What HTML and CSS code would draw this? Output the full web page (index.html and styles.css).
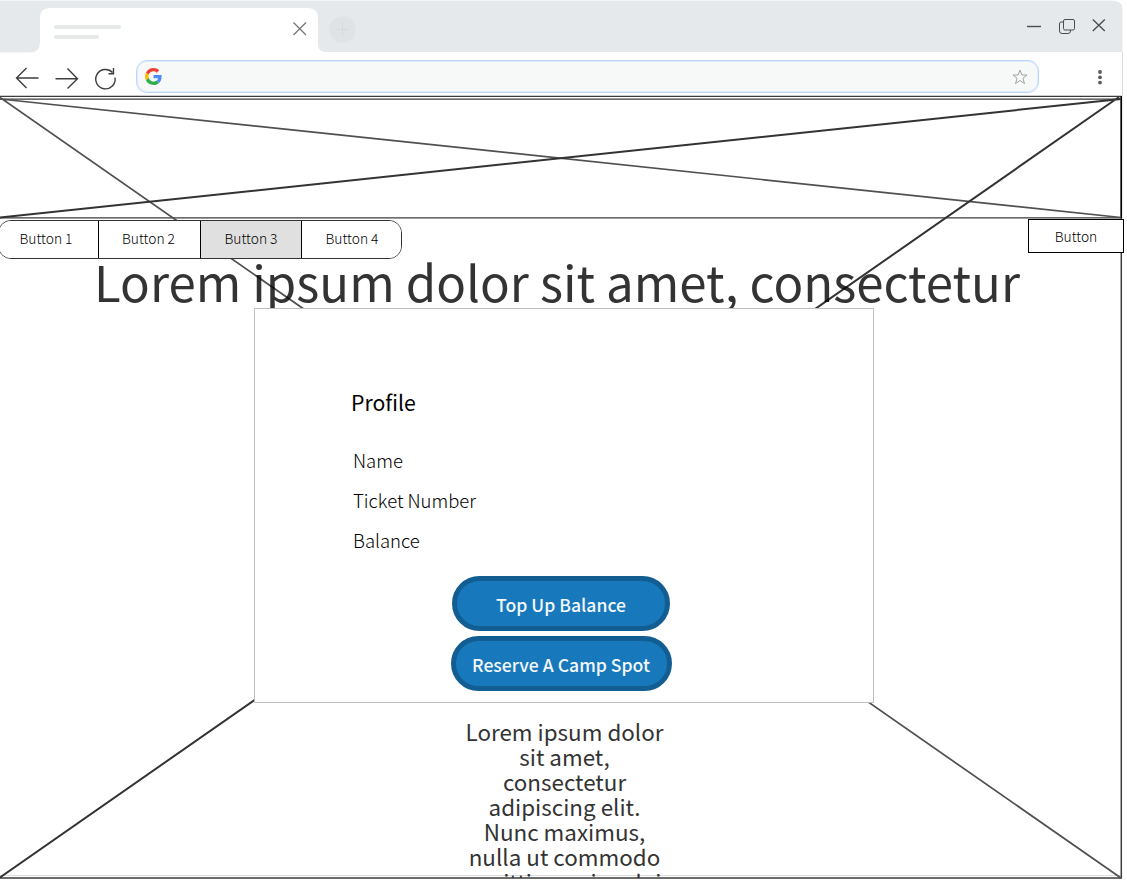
FILE: index.html
```html
<!DOCTYPE html>
<html lang="en">
<head>
<meta charset="utf-8">
<title>Profile</title>
<link rel="stylesheet" href="styles.css">
</head>
<body>
<div class="window">
  <header class="tabstrip">
    <svg class="tab-shape" width="1123" height="53" viewBox="0 0 1123 53">
      <path fill="#e5e9ec" d="M0 .5H1112Q1122.500 1 1122.500 8V52H326Q318 52 318 44V18Q318 8 308 8H50Q40 8 40 18V42Q40 52.500 30 52.500H0Z"/>
      <g fill="#e5e9e8"><rect x="54" y="25" width="67" height="4" rx="2"/><rect x="54" y="35" width="45" height="4" rx="2"/></g>
      <path d="M293.500 22.500 306 35M306 22.500 293.500 35" stroke="#747678" stroke-width="1.300"/>
      <circle cx="342.500" cy="29.500" r="13.300" fill="#dfe3e5"/>
      <path d="M336 29.500H349M342.500 23V36" stroke="#d6dadc" stroke-width="1"/>
      <g fill="none" stroke="#4b4e51" stroke-width="1.400">
        <path d="M1027 26.500H1041"/>
        <rect x="1063.500" y="19.500" width="11" height="10.500" rx="1.500" stroke-width="1"/>
        <path d="M1063.500 22H1061Q1059.500 22 1059.500 24V31Q1059.500 33.500 1062 33.500H1068Q1070.500 33.500 1070.500 31V30" stroke-width="1"/>
        <path d="M1092.800 19.500 1104.800 31M1104.800 19.500 1092.800 31"/>
      </g>
    </svg>
  </header>
  <div class="toolbar">
    <svg class="nav-icons" width="120" height="43" viewBox="0 0 120 43" fill="none" stroke="#3e3e3e" stroke-width="1.400">
      <path d="M38.500 25H16.500M26.500 15 16.500 25 26.500 35"/>
      <path d="M55.500 25.700H77.500M67.500 15.500 77.500 25.700 67.500 35.500"/>
      <path d="M115 24.500A9.700 9.700 0 1 1 112.500 19.500M113.500 15V20.800H108.500"/>
    </svg>
    <div class="address">
      <svg width="17" height="17" viewBox="0 0 48 48">
        <path fill="#ea4335" d="M24 9.500c3.540 0 6.710 1.220 9.210 3.600l6.850-6.850C35.900 2.380 30.470 0 24 0 14.620 0 6.510 5.380 2.560 13.220l7.980 6.190C12.430 13.720 17.740 9.500 24 9.500z"/>
        <path fill="#4e8cf5" d="M46.980 24.550c0-1.570-.15-3.090-.38-4.550H24v9.020h12.940c-.58 2.960-2.260 5.480-4.780 7.180l7.730 6c4.510-4.180 7.090-10.360 7.090-17.650z"/>
        <path fill="#fbbc05" d="M10.530 28.590c-.48-1.450-.76-2.990-.76-4.590s.27-3.140.76-4.590l-7.980-6.190C.92 16.460 0 20.120 0 24c0 3.880.92 7.540 2.560 10.780l7.970-6.190z"/>
        <path fill="#2fad4a" d="M24 48c6.480 0 11.930-2.130 15.890-5.810l-7.730-6c-2.150 1.450-4.920 2.300-8.160 2.300-6.260 0-11.570-4.220-13.470-9.910l-7.980 6.190C6.510 42.620 14.620 48 24 48z"/>
      </svg>
      <svg width="16" height="16" viewBox="0 0 16 16"><path d="M8 1 9.900 6H15L11 9.300 12.500 14.600 8 11.500 3.500 14.600 5 9.300 1 6H6.100Z" fill="none" stroke="#a0a2a3"/></svg>
    </div>
    <svg class="menu" width="6" height="18" viewBox="0 0 6 18" fill="#57595b"><circle cx="3" cy="3" r="1.900"/><circle cx="3" cy="8.300" r="1.900"/><circle cx="3" cy="13.600" r="1.900"/></svg>
  </div>
  <main class="page">
    <svg class="wire" width="1127" height="829" viewBox="0 52 1127 829" fill="none" stroke="#000">
      <path d="M0 875.500H1121M1122.500 52V96" stroke="#dcdcdc"/>
      <path d="M0 96.400H1121.500M0 99.100H1121.500M0 217.900H1121.500M0 878H1121.500" stroke="#3c3c3c" stroke-width="1.400"/>
      <path d="M1121.300 96V878.500" stroke="#3c3c3c" stroke-width="1.500"/>
      <path d="M1121.300 96V218" stroke-width="1.500"/>
      <path d="M0 99 1121 217.500M0 97.500 1121 878" stroke="#505050" stroke-width="1.700"/>
      <path d="M0 217.500 1121 99M0 877.500 1119 97" stroke="#333" stroke-width="2"/>
    </svg>
    <nav class="bar">
      <div class="group">
        <button class="seg">Button 1</button><button class="seg">Button 2</button><button class="seg active">Button 3</button><button class="seg">Button 4</button>
      </div>
      <button class="single">Button</button>
    </nav>
    <h1 class="title">Lorem ipsum dolor sit amet, consectetur</h1>
    <section class="card">
      <h2 class="card-title">Profile</h2>
      <ul class="fields"><li>Name</li><li>Ticket Number</li><li>Balance</li></ul>
      <div class="actions">
        <button class="pill topup">Top Up Balance</button>
        <button class="pill reserve">Reserve A Camp Spot</button>
      </div>
    </section>
    <p class="copy">Lorem ipsum dolor<br>sit amet,<br>consectetur<br>adipiscing elit.<br>Nunc maximus,<br>nulla ut commodo<br>sagittis, sapien dui</p>
  </main>
</div>
</body>
</html>
```
FILE: styles.css
```css
* { box-sizing: border-box; }
body { margin: 0; background: #fff; font-family: "Noto Sans CJK SC", sans-serif; }
button { font: inherit; color: inherit; padding: 0; margin: 0; white-space: nowrap; }
svg { display: block; flex: none; }
.window { width: 1127px; height: 881px; display: flex; flex-direction: column; overflow: hidden; }
.tabstrip { height: 53px; flex: none; }
.toolbar { height: 43px; flex: none; display: flex; align-items: flex-start; }
.address { width: 903px; height: 33px; margin: 7px 0 0 16px; border: 1px solid #bcd6fb; box-shadow: inset 0 0 0 1px #e0ecfb; border-radius: 11px; background: #f7f9f8; display: flex; align-items: center; justify-content: space-between; padding: 0 10px 0 8px; }
.menu { margin: 16px 0 0 58px; }
.page { position: relative; height: 785px; flex: none; display: flex; flex-direction: column; align-items: flex-start; }
.wire { position: absolute; left: 0; top: -44px; }
.bar { position: relative; width: 1124px; margin-top: 123px; display: flex; justify-content: space-between; align-items: flex-start; font-size: 13.800px; font-weight: 300; color: #000; }
.group { display: flex; width: 404px; height: 39px; margin: 1px 0 0 -2px; border: 1.5px solid #333; border-radius: 13px; overflow: hidden; background: #fff; }
.seg { flex: none; width: 101px; border: 0; border-right: 1px solid #000; background: #fff; padding: 0 0 3px; }
.seg:first-child { width: 100px; padding-right: 5px; }
.seg:nth-child(2) { width: 102px; padding-right: 2px; }
.seg:last-child { width: 100px; border-right: 0; }
.seg.active { width: 101px; background: #e0e0e0; }
.single { width: 96px; height: 34px; border: 1px solid #000; background: #fff; }
.title { position: relative; margin: -9px 0 0 94px; font-size: 49.200px; line-height: 62px; height: 58px; font-weight: 400; color: rgba(0, 0, 0, .8); white-space: nowrap; }
.card { position: relative; width: 620px; height: 395px; margin-left: 254px; border: 1px solid #c0c0c0; background: #fff; display: flex; flex-direction: column; }
.card-title { margin: 77px 0 0 96px; font-size: 21.200px; line-height: 32px; font-weight: 400; color: #000; }
.fields { list-style: none; margin: 22px 0 0 98px; padding: 0; font-size: 18.500px; line-height: 40px; font-weight: 300; color: #000; }
.actions { display: flex; flex-direction: column; align-items: center; gap: 5.500px; margin: 16.400px 6px 0 0; }
.pill { height: 54.500px; border: 5px solid #125e93; border-radius: 28px; background: #1878bc; color: #f4f8fc; font-size: 17.600px; font-weight: 500; padding-top: 1px; }
.topup { width: 218px; }
.reserve { width: 221px; }
.copy { position: relative; width: 300px; height: 160px; margin: 15px 0 0 414.500px; padding-top: 1px; overflow: hidden; text-align: center; font-size: 22.400px; line-height: 25px; color: #333; white-space: nowrap; }
```
